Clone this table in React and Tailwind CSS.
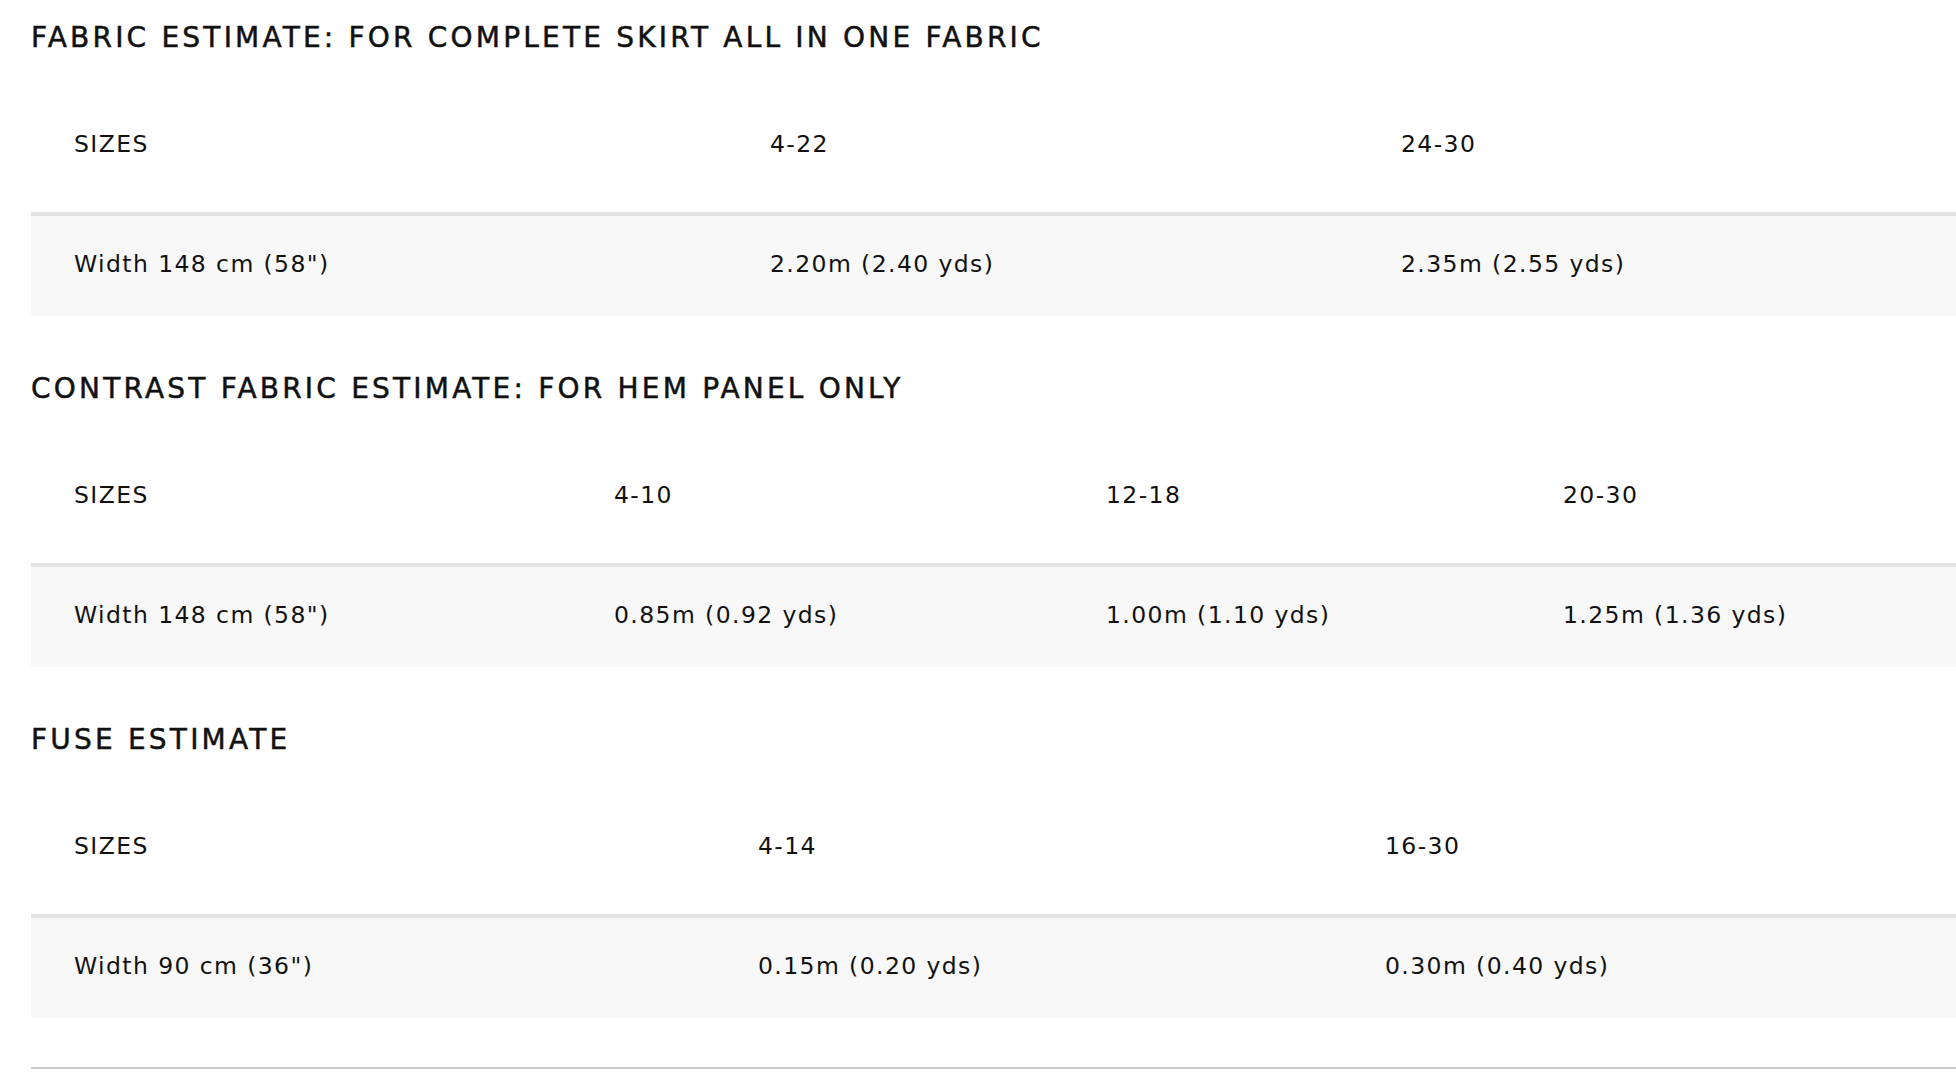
const sections = [
  {
    title: "FABRIC ESTIMATE: FOR COMPLETE SKIRT ALL IN ONE FABRIC",
    cols: "grid-cols-[696px_631px_1fr]",
    head: ["SIZES", "4-22", "24-30"],
    row: ["Width 148 cm (58\")", "2.20m (2.40 yds)", "2.35m (2.55 yds)"],
  },
  {
    title: "CONTRAST FABRIC ESTIMATE: FOR HEM PANEL ONLY",
    cols: "grid-cols-[540px_492px_457px_1fr]",
    head: ["SIZES", "4-10", "12-18", "20-30"],
    row: ["Width 148 cm (58\")", "0.85m (0.92 yds)", "1.00m (1.10 yds)", "1.25m (1.36 yds)"],
  },
  {
    title: "FUSE ESTIMATE",
    cols: "grid-cols-[684px_627px_1fr]",
    head: ["SIZES", "4-14", "16-30"],
    row: ["Width 90 cm (36\")", "0.15m (0.20 yds)", "0.30m (0.40 yds)"],
  },
];

function EstimateTable({ title, cols, head, row }) {
  return (
    <section>
      <h2 className="text-[28px] leading-[28px] tracking-[3.2px] text-[#111] [-webkit-text-stroke:0.5px_#111] mb-[26px]">
        {title}
      </h2>

      {/* header */}
      <div className={`grid ${cols} h-[134px] items-center`}>
        {head.map((c, i) => (
          <div key={i} className="pl-[43px] text-[23.5px] leading-none tracking-[1.4px] text-[#111]">
            {c}
          </div>
        ))}
      </div>

      {/* body row */}
      <div
        className={`grid ${cols} h-[104px] items-center border-t-4 border-[#e3e3e3] bg-[#f8f8f8] pb-[2px]`}
      >
        {row.map((c, i) => (
          <div key={i} className="pl-[43px] text-[23.5px] leading-none tracking-[1.4px] text-[#111] whitespace-nowrap">
            {c}
          </div>
        ))}
      </div>
    </section>
  );
}

export default function App() {
  return (
    <div className="w-[1956px] min-h-[1092px] bg-white pl-[31px] pt-[24px] overflow-hidden font-['DejaVu_Sans',sans-serif]">
      <div className="flex flex-col gap-[59px]">
        {sections.map((s, i) => (
          <EstimateTable key={i} {...s} />
        ))}
      </div>
      <div className="mt-[49px] h-[2px] bg-[#cccccc]" />
    </div>
  );
}
